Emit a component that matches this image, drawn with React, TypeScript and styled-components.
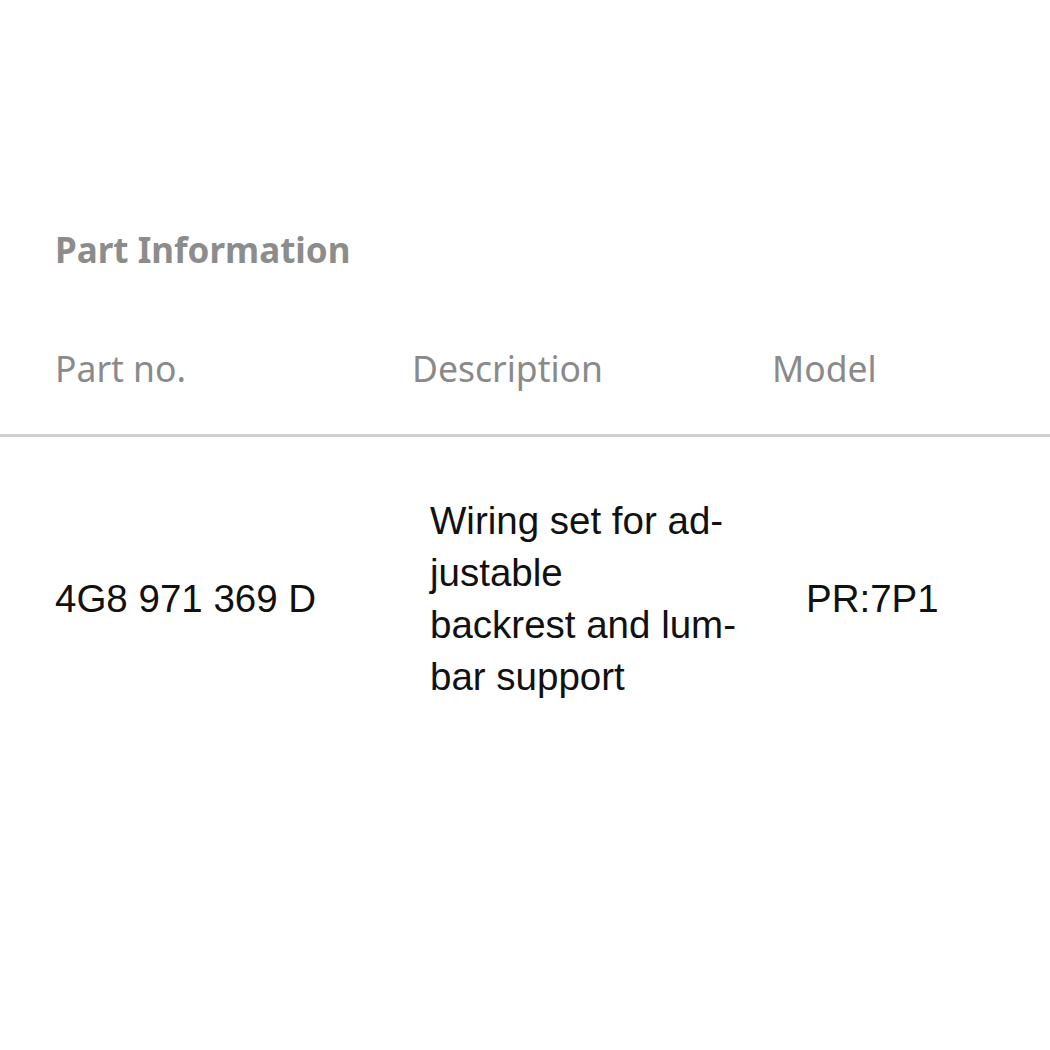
import React from "react";
import styled, { createGlobalStyle } from "styled-components";

const Global = createGlobalStyle`
  html, body { margin: 0; padding: 0; background: #fff; }
  body { font-family: "Liberation Sans", Arial, sans-serif; }
`;

const Page = styled.div`
  width: 1050px;
  height: 1050px;
  background: #fff;
  padding-top: 222px;
  box-sizing: border-box;
`;

const Title = styled.h2`
  margin: 0 0 0 55px;
  font-family: "Noto Sans", "Open Sans", sans-serif;
  font-weight: 700;
  font-size: 35px;
  line-height: 56px;
  color: #8c8c8c;
`;

const HeaderRow = styled.div`
  display: grid;
  grid-template-columns: 357px 360px 1fr;
  padding-left: 55px;
  margin-top: 56px;
  height: 100px;
  align-items: center;
  border-bottom: 3px solid #d0d0d0;
`;

const HeadCell = styled.div`
  font-family: "Noto Sans", "Open Sans", sans-serif;
  font-size: 35.5px;
  color: #8a8a8a;
  margin-top: -33px;
`;

const BodyRow = styled.div`
  display: grid;
  grid-template-columns: 357px 360px 1fr;
  padding-left: 55px;
  padding-top: 58px;
  align-items: center;
`;

const Cell = styled.div<{ $pad?: number }>`
  font-size: 38.5px;
  line-height: 52px;
  color: #111;
  padding-left: ${(p) => p.$pad ?? 0}px;
`;

export default function App() {
  return (
    <>
      <Global />
      <Page>
        <Title>Part Information</Title>
        <HeaderRow>
          <HeadCell>Part no.</HeadCell>
          <HeadCell>Description</HeadCell>
          <HeadCell>Model</HeadCell>
        </HeaderRow>
        <BodyRow>
          <Cell>4G8 971 369 D</Cell>
          <Cell $pad={18}>
            Wiring set for ad-
            <br />
            justable
            <br />
            backrest and lum-
            <br />
            bar support
          </Cell>
          <Cell $pad={34}>PR:7P1</Cell>
        </BodyRow>
      </Page>
    </>
  );
}
